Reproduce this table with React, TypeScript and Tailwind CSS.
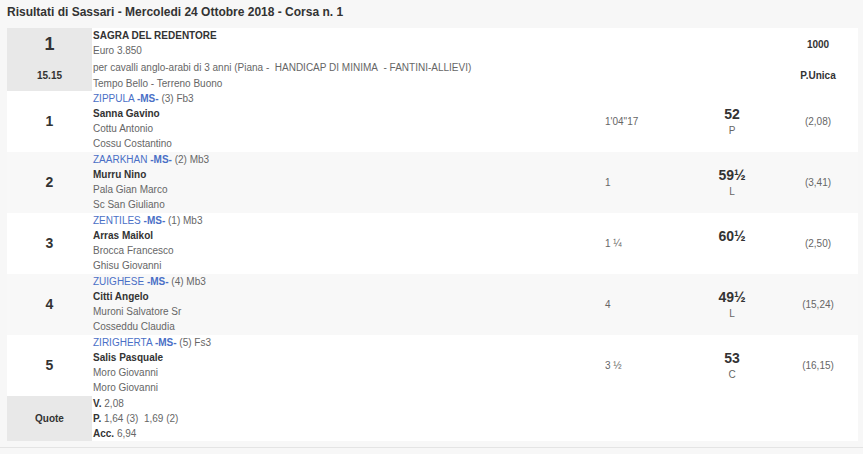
const RUNNERS = [
  { pos: '1', horse: 'ZIPPULA', info: '(3) Fb3', jockey: 'Sanna Gavino', trainer: 'Cottu Antonio', owner: 'Cossu Costantino', time: '1\'04"17', weight: '52', note: 'P', odds: '(2,08)' },
  { pos: '2', horse: 'ZAARKHAN', info: '(2) Mb3', jockey: 'Murru Nino', trainer: 'Pala Gian Marco', owner: 'Sc San Giuliano', time: '1', weight: '59½', note: 'L', odds: '(3,41)' },
  { pos: '3', horse: 'ZENTILES', info: '(1) Mb3', jockey: 'Arras Maikol', trainer: 'Brocca Francesco', owner: 'Ghisu Giovanni', time: '1 ¼', weight: '60½', note: '', odds: '(2,50)' },
  { pos: '4', horse: 'ZUIGHESE', info: '(4) Mb3', jockey: 'Citti Angelo', trainer: 'Muroni Salvatore Sr', owner: 'Cosseddu Claudia', time: '4', weight: '49½', note: 'L', odds: '(15,24)' },
  { pos: '5', horse: 'ZIRIGHERTA', info: '(5) Fs3', jockey: 'Salis Pasquale', trainer: 'Moro Giovanni', owner: 'Moro Giovanni', time: '3 ½', weight: '53', note: 'C', odds: '(16,15)' },
];

const COLS = 'grid grid-cols-[85px_508px_86px_92px_80px]';

export default function App() {
  return (
    <div
      className="min-h-[454px] w-[863px] bg-[#f7f7f7] text-[10px] text-[#666]"
      style={{ fontFamily: '"Liberation Sans", Arial, sans-serif' }}
    >
      <h1 className="px-[7px] pt-[3px] h-[28px] text-[12px] leading-[18px] font-bold text-[#333]">
        Risultati di Sassari - Mercoledi 24 Ottobre 2018 - Corsa n. 1
      </h1>

      <div className="mx-[7px] w-[851px] bg-white">
        {/* intestazione corsa */}
        <div className={COLS}>
          <div className="bg-[#e8e8e8] flex flex-col text-[#333] font-bold">
            <div className="h-[32px] flex items-center justify-center text-[18px]">1</div>
            <div className="h-[31px] flex items-center justify-center text-[10px]">15.15</div>
          </div>
          <div className="col-span-3 pl-[1px]">
            <div className="leading-[15px] font-bold text-[#333]">SAGRA DEL REDENTORE</div>
            <div className="leading-[16px]">Euro 3.850</div>
            <div className="leading-[17px]">per cavalli anglo-arabi di 3 anni (Piana -&nbsp; HANDICAP DI MINIMA&nbsp; - FANTINI-ALLIEVI)</div>
            <div className="leading-[15px]">Tempo Bello - Terreno Buono</div>
          </div>
          <div className="flex flex-col font-bold text-[#333]">
            <div className="h-[32px] flex items-center justify-center">1000</div>
            <div className="h-[31px] flex items-center justify-center">P.Unica</div>
          </div>
        </div>

        {RUNNERS.map((r, i) => (
          <div key={r.pos} className={`${COLS} h-[61px] ${i % 2 === 1 ? 'bg-[#f8f8f8]' : 'bg-white'}`}>
            <div className="flex items-center justify-center text-[14px] font-bold text-[#333]">{r.pos}</div>
            <div className="pl-[1px] leading-[15px]">
              <div>
                <span className="text-[#4a6fc6]">{r.horse} </span>
                <span className="text-[#4a6fc6] font-bold">-MS-</span> {r.info}
              </div>
              <div className="font-bold text-[#333]">{r.jockey}</div>
              <div>{r.trainer}</div>
              <div>{r.owner}</div>
            </div>
            <div className="flex items-center pl-[5px]">{r.time}</div>
            <div className="flex flex-col items-center justify-center">
              <div className="text-[14px] leading-[17px] font-bold text-[#333]">{r.weight}</div>
              <div className="leading-[15px] h-[15px]">{r.note}</div>
            </div>
            <div className="flex items-center justify-center">{r.odds}</div>
          </div>
        ))}

        {/* quote */}
        <div className={COLS}>
          <div className="bg-[#e8e8e8] flex items-center justify-center font-bold text-[#333]">Quote</div>
          <div className="col-span-4 pl-[1px] leading-[15px]">
            <div><b className="text-[#333]">V.</b> 2,08</div>
            <div><b className="text-[#333]">P.</b> 1,64 (3)&nbsp; 1,69 (2)</div>
            <div><b className="text-[#333]">Acc.</b> 6,94</div>
          </div>
        </div>
      </div>

      <div className="mt-[6px] h-px bg-[#e4e4e4]" />
    </div>
  );
}
